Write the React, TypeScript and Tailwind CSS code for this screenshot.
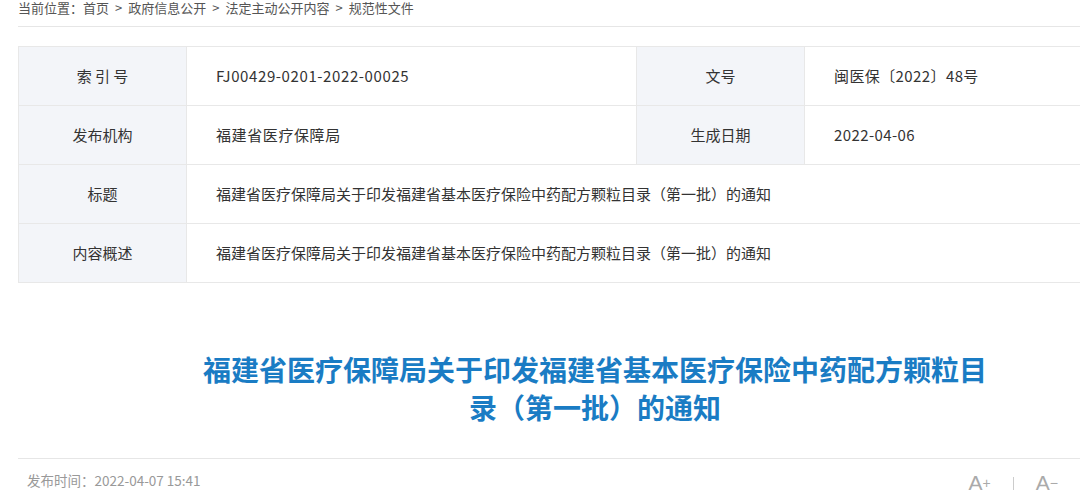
const rows: { label: string; value: string; label2?: string; value2?: string }[] = [
  { label: "索 引 号", value: "FJ00429-0201-2022-00025", label2: "文号", value2: "闽医保〔2022〕48号" },
  { label: "发布机构", value: "福建省医疗保障局", label2: "生成日期", value2: "2022-04-06" },
  { label: "标题", value: "福建省医疗保障局关于印发福建省基本医疗保险中药配方颗粒目录（第一批）的通知" },
  { label: "内容概述", value: "福建省医疗保障局关于印发福建省基本医疗保险中药配方颗粒目录（第一批）的通知" },
];

const crumbs = ["首页", "政府信息公开", "法定主动公开内容", "规范性文件"];

export default function App() {
  return (
    <div
      className="w-full h-[502px] overflow-hidden bg-white text-[#333]"
      style={{ fontFamily: '"Noto Sans CJK SC", "Noto Sans", sans-serif' }}
    >
      <div className="w-[1154px] ml-[18px]">
        {/* breadcrumb */}
        <div className="h-[27px] border-b border-[#e6e6e6] flex items-start text-[13px] leading-[15px] text-[#555]">
          <span>当前位置：</span>
          {crumbs.map((c, i) => (
            <span key={c} className="flex">
              {i > 0 && <span className="mx-[6px]">&gt;</span>}
              <span>{c}</span>
            </span>
          ))}
        </div>

        {/* info table */}
        <div className="mt-[19px] border-t border-l border-[#e8e8e8] text-[15px]">
          {rows.map((r, i) => (
            <div key={i} className="flex h-[59px] border-b border-[#e8e8e8]">
              <div className="w-[168px] shrink-0 flex items-center justify-center bg-[#f3f5f9] border-r border-[#e8e8e8]">
                {r.label}
              </div>
              {r.label2 ? (
                <>
                  <div className="w-[450px] shrink-0 flex items-center pl-[29px] border-r border-[#e8e8e8] tracking-[0.6px]">
                    {r.value}
                  </div>
                  <div className="w-[168px] shrink-0 flex items-center justify-center bg-[#f3f5f9] border-r border-[#e8e8e8]">
                    {r.label2}
                  </div>
                  <div className="flex-1 flex items-center pl-[29px] tracking-[0.4px]">{r.value2}</div>
                </>
              ) : (
                <div className="flex-1 flex items-center pl-[29px]">{r.value}</div>
              )}
            </div>
          ))}
        </div>

        {/* title */}
        <h1 className="mx-auto mt-[67px] w-[800px] text-center text-[28px] leading-[38px] font-bold text-[#1a7cc4]">
          福建省医疗保障局关于印发福建省基本医疗保险中药配方颗粒目录（第一批）的通知
        </h1>

        {/* footer meta */}
        <div className="mt-[32px] border-t border-[#e6e6e6] flex items-center justify-between h-[44px] pl-[9px] pr-[114px]">
          <span className="text-[13.5px] text-[#999]">发布时间：2022-04-07 15:41</span>
          <div className="flex items-center text-[#aaa] text-[21px] pt-[5px]" style={{ fontFamily: '"Liberation Sans", sans-serif' }}>
            <span>A<span className="text-[14px] align-[2px]">+</span></span>
            <span className="mx-[22px] w-px h-[13px] bg-[#ccc]" />
            <span>A<span className="text-[14px] align-[2px]">−</span></span>
          </div>
        </div>
      </div>
    </div>
  );
}
